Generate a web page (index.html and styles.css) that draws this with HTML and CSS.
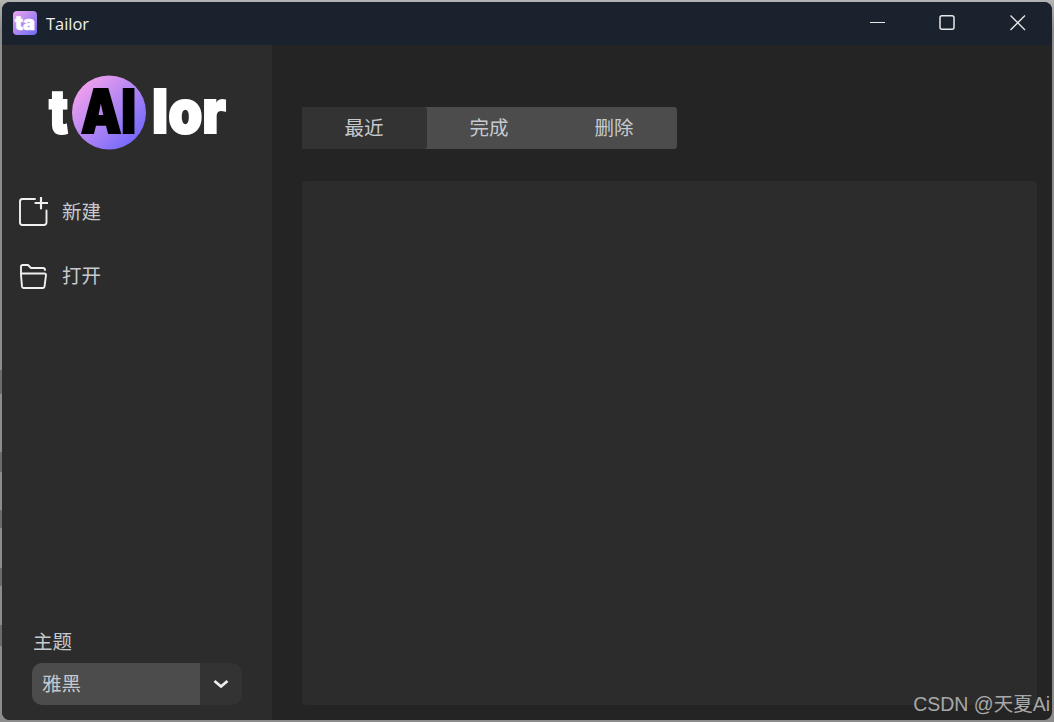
FILE: index.html
```html
<!DOCTYPE html>
<html lang="zh-CN">
<head>
<meta charset="utf-8">
<title>Tailor</title>
<link rel="stylesheet" href="styles.css">
</head>
<body>
<div class="window">
  <header class="titlebar">
    <svg class="app-icon" width="24" height="24" viewBox="0 0 24 24">
      <defs><linearGradient id="ig" x1="0" y1="0" x2="1" y2="1"><stop offset="0" stop-color="#f0a4ee"/><stop offset="1" stop-color="#6a6cf4"/></linearGradient></defs>
      <rect width="24" height="24" rx="4" fill="url(#ig)"/>
      <text x="2" y="19" class="icon-text" textLength="20" lengthAdjust="spacingAndGlyphs">ta</text>
    </svg>
    <span class="app-title">Tailor</span>
    <div class="win-controls">
      <svg width="16" height="16" viewBox="0 0 16 16"><path d="M0 7.500H15" stroke="#e8e8e8" stroke-width="1" fill="none"/></svg>
      <svg width="16" height="16" viewBox="0 0 16 16"><rect x="0" y="0.700" width="14" height="13.600" rx="2" stroke="#e8e8e8" stroke-width="1.500" fill="none"/></svg>
      <svg width="16" height="16" viewBox="0 0 16 16"><path d="M0.500 0.500L15 15M15 0.500L0.500 15" stroke="#e8e8e8" stroke-width="1.300" fill="none"/></svg>
    </div>
  </header>
  <div class="body">
    <aside class="sidebar">
      <svg class="logo" width="190" height="90" viewBox="0 0 190 90">
        <defs><linearGradient id="lg" x1="0.100" y1="0.100" x2="0.900" y2="0.900"><stop offset="0" stop-color="#f4a2ec"/><stop offset="1" stop-color="#7068fc"/></linearGradient></defs>
        <circle cx="69" cy="42.500" r="37" fill="url(#lg)"/>
        <text x="9" y="63" class="logo-text white" textLength="19" lengthAdjust="spacingAndGlyphs">t</text>
        <text x="41" y="63" class="logo-text black" textLength="55" lengthAdjust="spacingAndGlyphs">AI</text>
        <text x="112" y="63" class="logo-text white" textLength="74" lengthAdjust="spacingAndGlyphs">lor</text>
      </svg>
      <nav class="nav">
        <div class="nav-item">
          <svg width="30" height="30" viewBox="0 0 30 30" fill="none" stroke="#f0f0f0" stroke-width="1.900" stroke-linecap="round"><path d="M17 2H4.500a2.500 2.500 0 0 0-2.500 2.500V25.500a2.500 2.500 0 0 0 2.500 2.500H26a2.500 2.500 0 0 0 2.500-2.500V13.500"/><path d="M23 0.500V11.500M17.500 6H29.500" stroke-width="2.200"/></svg>
          <span class="nav-label">新建</span>
        </div>
        <div class="nav-item">
          <svg width="30" height="30" viewBox="0 0 30 30" fill="none" stroke="#f0f0f0" stroke-width="1.900" stroke-linejoin="round" stroke-linecap="round"><path d="M3 13V5.500a1.500 1.500 0 0 1 1.500-1.500H10l3 3H25a2 2 0 0 1 2 2"/><path d="M5.500 27H25a1.500 1.500 0 0 0 1.500-1.300L28 14a1.500 1.500 0 0 0-1.500-1.500H4.500A1.500 1.500 0 0 0 3 14L4 25.700A1.500 1.500 0 0 0 5.500 27z"/></svg>
          <span class="nav-label">打开</span>
        </div>
      </nav>
      <div class="theme">
        <div class="theme-label">主题</div>
        <div class="select">
          <span class="select-value">雅黑</span>
          <span class="select-arrow">
            <svg width="16" height="10" viewBox="0 0 16 10"><path d="M1.500 2L8 7.500L14.500 2" fill="none" stroke="#eeeeee" stroke-width="2.800"/></svg>
          </span>
        </div>
      </div>
    </aside>
    <main class="main">
      <div class="tabs">
        <div class="tab active">最近</div>
        <div class="tab">完成</div>
        <div class="tab">删除</div>
      </div>
      <div class="panel"></div>
    </main>
  </div>
</div>
<div class="watermark">CSDN @天夏Ai</div>
</body>
</html>
```
FILE: styles.css
```css
* { box-sizing: border-box; }
html, body { margin: 0; height: 100%; }
body {
  width: 1054px;
  height: 722px;
  padding: 2px;
  background:
    linear-gradient(transparent 370px, #6c6c6c 370px, #6c6c6c 394px, transparent 394px,
      transparent 452px, #6c6c6c 452px, #6c6c6c 472px, transparent 472px,
      transparent 510px, #6c6c6c 510px, #6c6c6c 528px, transparent 528px,
      transparent 568px, #6c6c6c 568px, #6c6c6c 586px, transparent 586px,
      transparent 625px, #6c6c6c 625px, #6c6c6c 646px, transparent 646px) left top / 2px 100% no-repeat,
    linear-gradient(#b4b4b4 0, #8c8c8c 30px);
  overflow: hidden;
  font-family: "Noto Sans CJK SC", "Liberation Sans", sans-serif;
  color: #c6cacf;
  font-size: 19.500px;
}
.window {
  width: 1050px;
  height: 718px;
  border-radius: 8px;
  overflow: hidden;
  display: flex;
  flex-direction: column;
  background: #242424;
}
.titlebar {
  height: 43px;
  flex: none;
  background: #1a222d;
  display: flex;
  align-items: center;
  padding: 0 0 1px 11px;
}
.icon-text { font: 900 19px Inter, sans-serif; fill: #fff; stroke: #fff; stroke-width: 0.600px; }
.app-title {
  margin-left: 9px;
  font: 16.400px "Open Sans", "Liberation Sans", sans-serif;
  color: #f0f0f0;
}
.win-controls {
  margin-left: auto;
  display: flex;
  gap: 54px;
  padding-right: 26px;
}
.win-controls svg { overflow: visible; }
.body { flex: 1; display: flex; min-height: 0; }
.sidebar {
  width: 270px;
  flex: none;
  background: #2c2c2c;
  display: flex;
  flex-direction: column;
  padding-bottom: 15px;
}
.logo { margin: 25px 0 0 38px; display: block; flex: none; overflow: visible; }
.logo-text { font: 900 60px Inter, sans-serif; stroke-width: 2px; }
.white { fill: #fff; stroke: #fff; }
.black { fill: #000; stroke: #000; }
.nav { margin-top: 20px; display: flex; flex-direction: column; }
.nav-item {
  height: 64px;
  display: flex;
  align-items: center;
  gap: 14px;
  padding-left: 16px;
}
.nav-label { padding-bottom: 3px; }
.theme { margin-top: auto; padding: 0 30px; }
.theme-label { padding-left: 1px; margin-bottom: 8px; line-height: 28px; }
.select {
  height: 42px;
  display: flex;
  border-radius: 10px;
  overflow: hidden;
  background: #333;
}
.select-value {
  width: 168px;
  background: #4c4c4c;
  padding-left: 10px;
  line-height: 40px;
}
.select-arrow {
  flex: 1;
  display: flex;
  align-items: center;
  justify-content: center;
}
.main {
  flex: 1;
  display: flex;
  flex-direction: column;
  padding: 62px 15px 15px 30px;
  gap: 32px;
  min-width: 0;
}
.tabs {
  width: 375px;
  height: 42px;
  flex: none;
  display: flex;
  background: #4c4c4c;
  border-radius: 3px;
}
.tab {
  flex: 1;
  display: flex;
  align-items: center;
  justify-content: center;
  border-radius: 3px;
  padding: 0 1px 4px 0;
}
.tab.active { background: #333; }
.panel {
  flex: 1;
  background: #2c2c2c;
  border-radius: 4px;
}
.watermark {
  position: absolute;
  right: 4px;
  bottom: 4px;
  font: 19.500px "Liberation Sans", "Noto Sans CJK SC", sans-serif;
  color: #a8a8a8;
  line-height: 28px;
  white-space: nowrap;
}
```
